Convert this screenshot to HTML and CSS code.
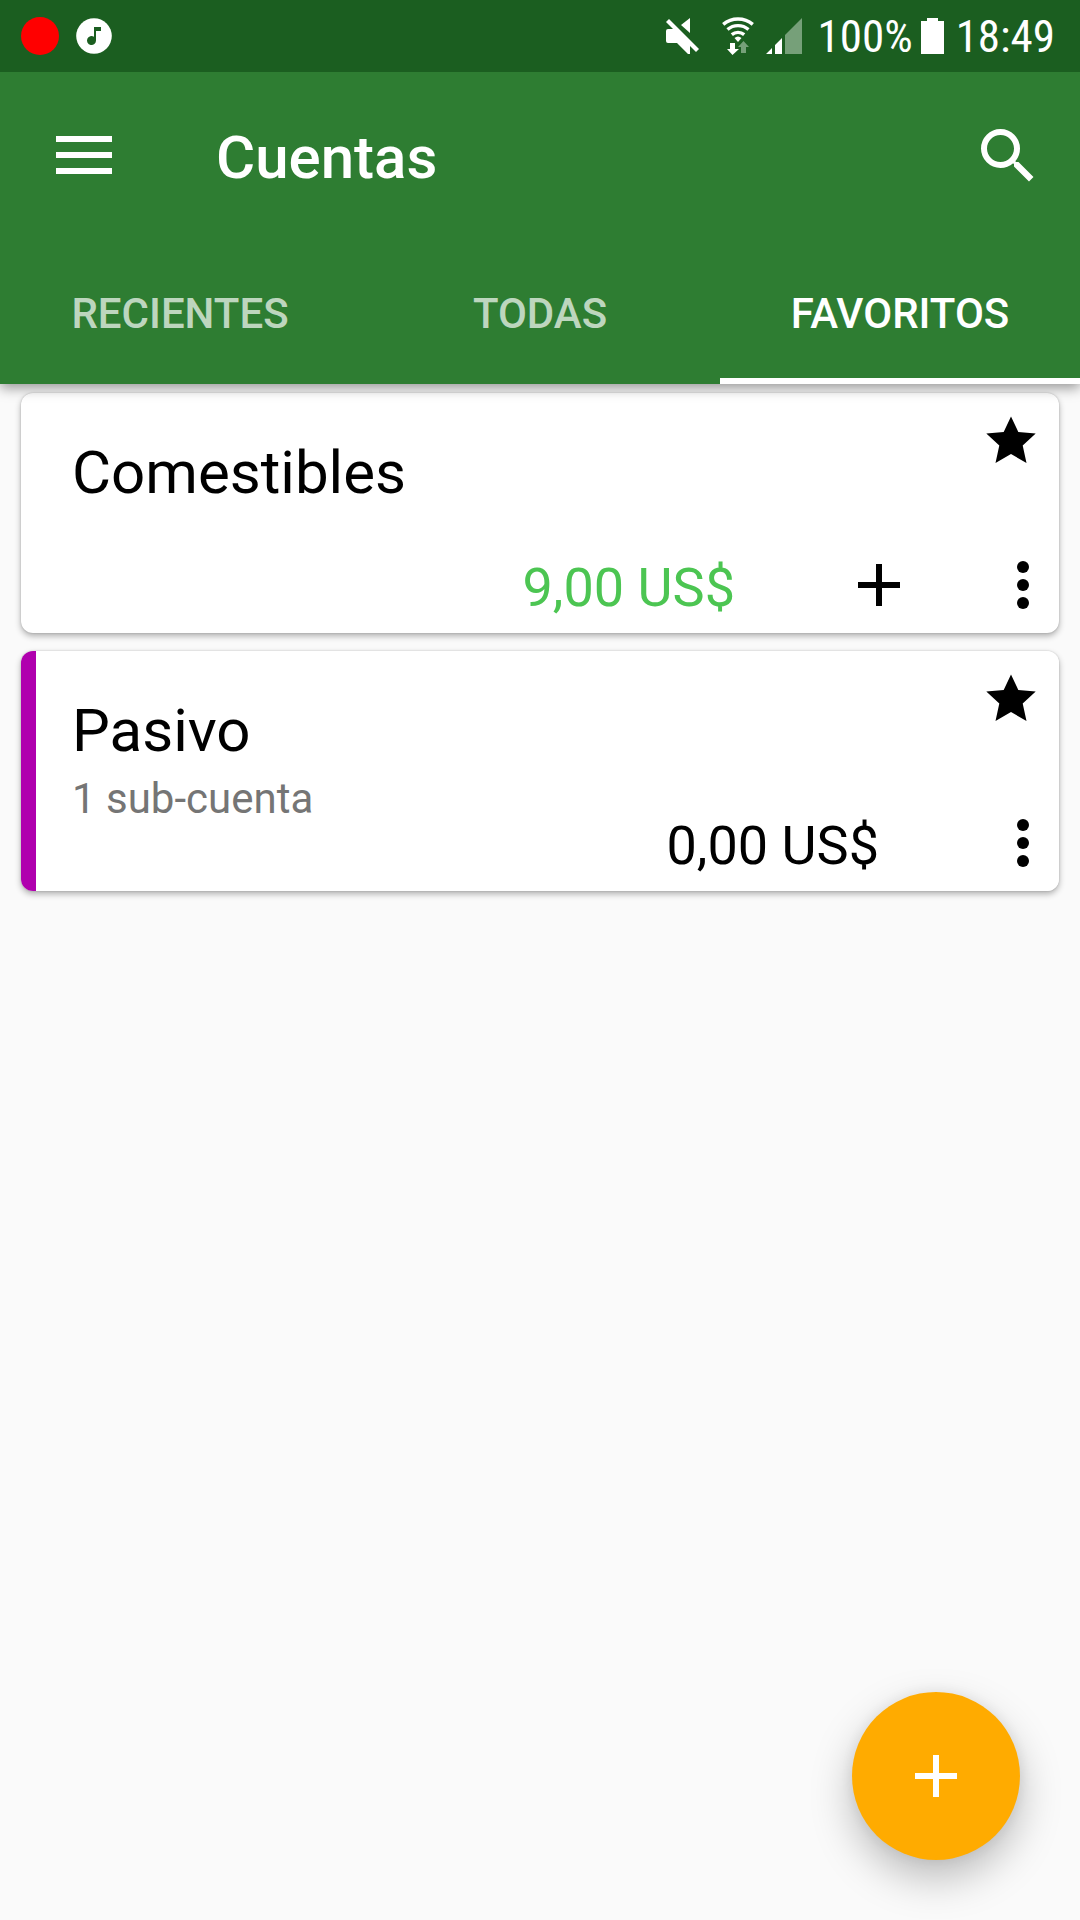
FILE: index.html
```html
<!DOCTYPE html>
<html lang="es">
<head>
<meta charset="utf-8">
<meta name="viewport" content="width=device-width, initial-scale=1">
<title>Cuentas</title>
<link rel="stylesheet" href="styles.css">
</head>
<body>
<div class="status-bar">
  <div class="status-group">
    <svg class="status-record" width="38" height="38" viewBox="0 0 38 38" aria-hidden="true"><circle cx="19" cy="19" r="19" fill="#f00"/></svg>
    <svg width="36" height="36" viewBox="0 0 36 36" aria-hidden="true"><circle cx="18" cy="18" r="17.8" fill="#fff"/><path fill="#1b5e20" d="M18 9h7v4h-5v9.500a4.500 4.500 0 1 1-2-3.700z"/></svg>
  </div>
  <div class="status-group">
    <svg class="status-mute" width="34" height="36" viewBox="0 0 34 36" aria-hidden="true"><g fill="#fff"><path d="M24 0v15L15 7z"/><path d="M2 11h8l14 14v11h-2L11 25H2a2 2 0 0 1-2-2V13a2 2 0 0 1 2-2z"/><path d="M3 1l30 30-3 3L0 4z"/></g></svg>
    <svg class="status-wifi" width="34" height="38" viewBox="0 0 34 38" aria-hidden="true"><g fill="none" stroke="#fff" stroke-width="3.400"><path d="M1.200 7.400A23 23 0 0 1 30.800 7.400"/><path d="M5.500 12.500A16.300 16.300 0 0 1 26.500 12.500"/><path d="M9.800 17.600A9.700 9.700 0 0 1 22.200 17.600"/></g><path fill="#fff" d="M12.500 21q3.500-3 7 0L16 25zM8 26h5v6h4l-6.500 6L5 32h3z"/><path fill="#76a079" d="M21.500 24l5.500 6h-3v6h-5v-6h-3z"/></svg>
    <svg class="status-signal" width="37" height="36" viewBox="0 0 37 36" aria-hidden="true"><path fill="#fff" d="M0 36l6-6v6zM9 36V27l7-7v16z"/><path fill="#76a079" d="M19 36V17L36 0v36z"/></svg>
    <span class="status-text">100%</span>
    <svg class="status-battery" width="23" height="36" viewBox="0 0 23 36" aria-hidden="true"><path fill="#fff" d="M6 0h11v3h6v33H0V3h6z"/></svg>
    <span class="status-text">18:49</span>
  </div>
</div>
<header class="app-bar">
  <div class="toolbar">
    <button class="icon-button" type="button" aria-label="Menú"><svg width="56" height="40" viewBox="0 0 56 40"><path fill="#fff" d="M0 0h56v6H0zM0 16h56v6H0zM0 32h56v6H0z"/></svg></button>
    <h1 class="toolbar-title">Cuentas</h1>
    <button class="icon-button" type="button" aria-label="Buscar"><svg width="72" height="72" viewBox="0 0 24 24"><path fill="#fff" d="M15.500 14h-.79l-.28-.27A6.471 6.471 0 0 0 16 9.500 6.500 6.500 0 1 0 9.500 16c1.610 0 3.090-.59 4.230-1.570l.27.28v.79l5 4.990L20.490 19l-4.990-5zm-6 0C7.010 14 5 11.990 5 9.500S7.010 5 9.500 5 14 7.010 14 9.500 11.990 14 9.500 14z"/></svg></button>
  </div>
  <nav class="tabs">
    <a class="tab" href="#recientes">RECIENTES</a>
    <a class="tab" href="#todas">TODAS</a>
    <a class="tab tab-active" href="#favoritos" aria-current="page">FAVORITOS</a>
  </nav>
</header>
<main class="accounts">
  <article class="card">
    <div class="card-info">
      <h2 class="card-title">Comestibles</h2>
    </div>
    <button class="icon-button card-star" type="button" aria-label="Favorito"><svg width="72" height="72" viewBox="0 0 72 72"><path d="M36 11.500l7.300 15.500 17.400 1.500-13 12 3.800 17.500-15.500-9-15.500 9 3.800-17.500-13-12 17.400-1.500z"/></svg></button>
    <div class="card-actions">
      <span class="amount amount-positive">9,00 US$</span>
      <button class="icon-button card-add" type="button" aria-label="Añadir transacción"><svg width="42" height="42" viewBox="0 0 42 42"><path d="M18 0h6v18h18v6H24v18h-6V24H0v-6h18z"/></svg></button>
      <button class="icon-button card-more" type="button" aria-label="Más opciones"><svg width="72" height="72" viewBox="0 0 72 72"><circle cx="36" cy="18" r="6"/><circle cx="36" cy="36" r="6"/><circle cx="36" cy="54" r="6"/></svg></button>
    </div>
  </article>
  <article class="card card-purple">
    <div class="card-info">
      <h2 class="card-title">Pasivo</h2>
      <p class="card-subtitle">1 sub-cuenta</p>
    </div>
    <button class="icon-button card-star" type="button" aria-label="Favorito"><svg width="72" height="72" viewBox="0 0 72 72"><path d="M36 11.500l7.300 15.500 17.400 1.500-13 12 3.800 17.500-15.500-9-15.500 9 3.800-17.500-13-12 17.400-1.500z"/></svg></button>
    <div class="card-actions">
      <span class="amount">0,00 US$</span>
      <button class="icon-button card-more" type="button" aria-label="Más opciones"><svg width="72" height="72" viewBox="0 0 72 72"><circle cx="36" cy="18" r="6"/><circle cx="36" cy="36" r="6"/><circle cx="36" cy="54" r="6"/></svg></button>
    </div>
  </article>
</main>
<button class="icon-button fab" type="button" aria-label="Nueva cuenta"><svg width="42" height="42" viewBox="0 0 42 42"><path fill="#fff" d="M18 0h6v18h18v6H24v18h-6V24H0v-6h18z"/></svg></button>
</body>
</html>
```
FILE: styles.css
```css
* {
  box-sizing: border-box;
}

body {
  margin: 0;
  min-height: 100vh;
  background: #fafafa;
  color: #000;
  font-family: Roboto, "Noto Sans", sans-serif;
}

h1,
h2,
p {
  margin: 0;
}

svg {
  display: block;
  flex: none;
}

.icon-button {
  display: flex;
  flex: none;
  align-items: center;
  justify-content: center;
  margin: 0;
  padding: 0;
  border: 0;
  background: none;
  cursor: pointer;
}

.status-bar {
  position: relative;
  z-index: 2;
  display: flex;
  align-items: center;
  justify-content: space-between;
  height: 72px;
  padding: 0 25px 0 21px;
  background: #1b5e20;
}

.status-group {
  display: flex;
  align-items: center;
}

.status-record {
  margin-right: 17px;
}

.status-mute {
  margin-right: 22px;
}

.status-wifi {
  margin-right: 10px;
}

.status-signal {
  margin-right: 15px;
}

.status-battery {
  margin: 0 12px 0 8px;
}

.status-text {
  padding-top: 2px;
  color: #fff;
  font-family: "Roboto Condensed", "Liberation Sans Narrow", Roboto, sans-serif;
  font-size: 45px;
  line-height: 54px;
}

.app-bar {
  position: relative;
  z-index: 1;
  background: #2e7d32;
  box-shadow: 0 4px 12px rgba(0, 0, 0, 0.4);
}

.toolbar {
  display: flex;
  align-items: center;
  height: 168px;
  padding: 0 36px 0 56px;
}

.toolbar-title {
  flex: 1;
  padding: 4px 0 0 104px;
  color: #fff;
  font-size: 60px;
  font-weight: 500;
  line-height: 70px;
}

.tabs {
  display: grid;
  grid-template-columns: repeat(3, 1fr);
  height: 144px;
}

.tab {
  display: flex;
  align-items: center;
  justify-content: center;
  padding-top: 10px;
  border-bottom: 6px solid transparent;
  color: rgba(255, 255, 255, 0.7);
  font-size: 42px;
  font-weight: 500;
  line-height: 50px;
  text-decoration: none;
}

.tab-active {
  border-bottom-color: #fff;
  color: #fff;
}

.accounts {
  display: grid;
  gap: 18px;
  padding: 9px 21px;
}

.card {
  display: grid;
  grid-template-columns: 1fr auto;
  grid-template-rows: 1fr auto;
  min-height: 240px;
  padding-bottom: 12px;
  border-radius: 12px;
  background: #fff;
  box-shadow: 0 3px 6px rgba(0, 0, 0, 0.3), 0 0 2px rgba(0, 0, 0, 0.2);
}

.card-purple {
  background: linear-gradient(to right, #b000ae 15px, #fff 15px);
}

.card-info {
  grid-area: 1 / 1 / 3 / 2;
  padding: 45px 0 0 51px;
}

.card-title {
  font-size: 60px;
  font-weight: 400;
  line-height: 70px;
}

.card-subtitle {
  padding-top: 8px;
  color: #757575;
  font-size: 42px;
  line-height: 50px;
}

.card-star {
  grid-area: 1 / 2;
  align-self: start;
  justify-self: end;
  padding: 12px 12px 0 0;
}

.card-actions {
  display: flex;
  grid-area: 2 / 1 / 3 / 3;
  align-items: flex-end;
  justify-content: flex-end;
}

.amount {
  margin-right: 72px;
  font-size: 54px;
  line-height: 66px;
}

.amount-positive {
  color: #4cc552;
}

.card-add {
  width: 144px;
  height: 72px;
}

.card-more {
  padding-left: 36px;
}

.fab {
  position: fixed;
  right: 60px;
  bottom: 60px;
  width: 168px;
  height: 168px;
  border-radius: 50%;
  background: #ffab00;
  box-shadow: 0 18px 42px rgba(0, 0, 0, 0.25), 0 0 16px rgba(0, 0, 0, 0.08);
}
```
